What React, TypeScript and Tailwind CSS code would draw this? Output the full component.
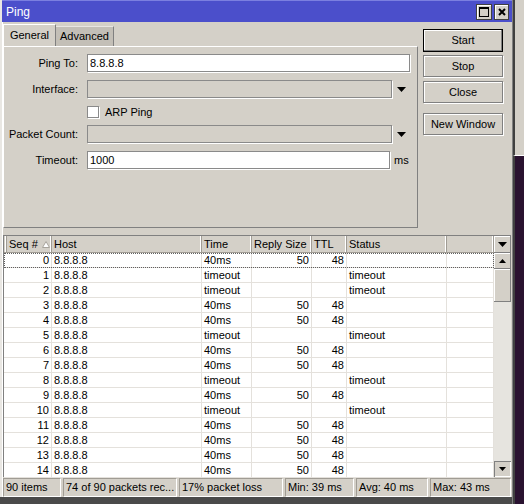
import React from 'react';

type Row = { seq: number; time: string; size?: string; ttl?: string; status?: string };

const rows: Row[] = [
  { seq: 0, time: '40ms', size: '50', ttl: '48' },
  { seq: 1, time: 'timeout', status: 'timeout' },
  { seq: 2, time: 'timeout', status: 'timeout' },
  { seq: 3, time: '40ms', size: '50', ttl: '48' },
  { seq: 4, time: '40ms', size: '50', ttl: '48' },
  { seq: 5, time: 'timeout', status: 'timeout' },
  { seq: 6, time: '40ms', size: '50', ttl: '48' },
  { seq: 7, time: '40ms', size: '50', ttl: '48' },
  { seq: 8, time: 'timeout', status: 'timeout' },
  { seq: 9, time: '40ms', size: '50', ttl: '48' },
  { seq: 10, time: 'timeout', status: 'timeout' },
  { seq: 11, time: '40ms', size: '50', ttl: '48' },
  { seq: 12, time: '40ms', size: '50', ttl: '48' },
  { seq: 13, time: '40ms', size: '50', ttl: '48' },
  { seq: 14, time: '40ms', size: '50', ttl: '48' },
];

function DownArrow() {
  return (
    <svg width="9" height="5" viewBox="0 0 9 5">
      <path d="M0 0h9L4.5 5z" fill="#000" />
    </svg>
  );
}

function UpArrow() {
  return (
    <svg width="7" height="4" viewBox="0 0 7 4">
      <path d="M0 4h7L3.5 0z" fill="#000" />
    </svg>
  );
}

function FormRow({ label, children, className = '' }: { label: string; children?: React.ReactNode; className?: string }) {
  return (
    <div className={`flex items-center ${className}`}>
      <div className="w-[75px] text-right pr-[1px]">{label}</div>
      <div className="ml-[8px] flex items-center">{children}</div>
    </div>
  );
}

function Button({ label, main = false, className = '' }: { label: string; main?: boolean; className?: string }) {
  return (
    <div
      className={`w-[80px] flex items-center justify-center ${
        main ? 'h-[23px] border border-black shadow-[inset_-1px_-1px_0_#808080,inset_1px_1px_0_#fff]' : 'h-[22px] border border-[#808080] shadow-[1px_1px_0_#fff,inset_1px_1px_0_#fff]'
      } ${className}`}
    >
      {label}
    </div>
  );
}

export default function App() {
  const header = 'h-[16px] flex items-center border-r border-[#a09c94] shadow-[inset_-1px_0_0_#fff] pl-[2px]';
  const cell = 'h-[15px] flex items-center border-r border-b border-[#e4e1dc] px-[2px]';

  return (
    <div className="w-[524px] h-[504px] flex bg-[#4a4a4a] overflow-hidden font-['Liberation_Sans',Arial,sans-serif] text-[11px] text-black leading-none">
      {/* window */}
      <div className="w-[512px] h-[497px] flex flex-col bg-[#d4d0c8] border-l-2 border-[#e9e7e3] shadow-[inset_1px_0_0_#fff]">
        {/* title bar */}
        <div className="h-[22px] bg-[#4b4fcb] border-t border-[#7b7fe0] flex items-center pl-[4px] pr-[3px] text-white text-[12px]">
          <span className="flex-1">Ping</span>
          <div className="w-[16px] h-[16px] bg-[#d4d0c8] border border-[#404040] shadow-[inset_1px_1px_0_#fff] flex items-center justify-center">
            <div className="w-[10px] h-[10px] border border-black border-t-2" />
          </div>
          <div className="w-[15px] h-[16px] ml-[2px] bg-[#d4d0c8] border border-[#404040] shadow-[inset_1px_1px_0_#fff] flex items-center justify-center">
            <svg width="8" height="8" viewBox="0 0 8 8">
              <path d="M1 1l6 6M7 1L1 7" stroke="#000" strokeWidth="2" />
            </svg>
          </div>
        </div>

        {/* top area */}
        <div className="h-[206px] flex">
          <div className="w-[415px] ml-[1px] pt-[2px] flex flex-col">
            <div className="h-[22px] flex items-end">
              <div className="w-[53px] h-[22px] border-t border-l border-white border-r border-r-[#808080] flex items-center justify-center pb-[1px]">
                General
              </div>
              <div className="w-[58px] h-[20px] bg-[#c3bfb7] border-t border-r border-t-[#e8e6e2] border-r-[#808080] flex items-center justify-center">
                Advanced
              </div>
            </div>
            <div className="h-[182px] border-t border-l border-white border-r border-b border-r-[#808080] border-b-[#808080] pt-[7px] flex flex-col">
              <FormRow label="Ping To:">
                <div className="w-[323px] h-[18px] bg-white border border-[#8a8a8a] shadow-[1px_1px_0_#fff] flex items-center pl-[2px]">
                  8.8.8.8
                </div>
              </FormRow>
              <FormRow label="Interface:" className="mt-[8px]">
                <div className="w-[305px] h-[18px] border border-[#8a8a8a] shadow-[1px_1px_0_#fff]" />
                <div className="ml-[5px]">
                  <DownArrow />
                </div>
              </FormRow>
              <FormRow label="" className="mt-[8px]">
                <div className="w-[12px] h-[12px] bg-white border border-[#8a8a8a] shadow-[1px_1px_0_#fff]" />
                <span className="ml-[6px]">ARP Ping</span>
              </FormRow>
              <FormRow label="Packet Count:" className="mt-[7px]">
                <div className="w-[305px] h-[18px] border border-[#8a8a8a] shadow-[1px_1px_0_#fff]" />
                <div className="ml-[5px]">
                  <DownArrow />
                </div>
              </FormRow>
              <FormRow label="Timeout:" className="mt-[8px]">
                <div className="w-[303px] h-[18px] bg-white border border-[#8a8a8a] shadow-[1px_1px_0_#fff] flex items-center pl-[2px]">
                  1000
                </div>
                <span className="ml-[4px]">ms</span>
              </FormRow>
            </div>
          </div>
          <div className="ml-[5px] pt-[7px] flex flex-col">
            <Button label="Start" main />
            <Button label="Stop" className="mt-[3px]" />
            <Button label="Close" className="mt-[4px]" />
            <Button label="New Window" className="mt-[10px]" />
          </div>
        </div>

        {/* splitter */}
        <div className="h-[7px]" />

        {/* table */}
        <div className="ml-[1px] mr-[1px] h-[242px] flex border-t border-l border-[#808080]">
          <div className="flex-1 flex flex-col bg-white">
            <div className="flex bg-[#d4d0c8] border-b border-[#a09c94]">
              <div className={`${header} w-[3px] pl-0`} />
              <div className={`${header} w-[45px] gap-[4px]`}>
                <span>Seq #</span>
                <svg width="8" height="7" viewBox="0 0 8 7">
                  <path d="M0.5 6.5h7L4 0.5z" fill="#fff" stroke="#a8a49c" />
                </svg>
              </div>
              <div className={`${header} w-[150px]`}>Host</div>
              <div className={`${header} w-[50px]`}>Time</div>
              <div className={`${header} w-[60px]`}>Reply Size</div>
              <div className={`${header} w-[35px]`}>TTL</div>
              <div className={`${header} w-[100px]`}>Status</div>
              <div className={`${header} flex-1`} />
            </div>
            {rows.map((r, i) => (
              <div key={r.seq} className={`flex ${i === 0 ? 'outline outline-1 outline-dotted outline-[#606060] -outline-offset-1' : ''}`}>
                <div className="w-[3px] h-[15px] border-b border-[#e4e1dc]" />
                <div className={`${cell} w-[45px] justify-end`}>{r.seq}</div>
                <div className={`${cell} w-[150px]`}>8.8.8.8</div>
                <div className={`${cell} w-[50px]`}>{r.time}</div>
                <div className={`${cell} w-[60px] justify-end`}>{r.size}</div>
                <div className={`${cell} w-[35px] justify-end`}>{r.ttl}</div>
                <div className={`${cell} w-[100px]`}>{r.status}</div>
                <div className={`${cell} flex-1`} />
              </div>
            ))}
          </div>
          {/* scrollbar */}
          <div className="w-[17px] flex flex-col bg-[#e6e4df]">
            <div className="h-[17px] bg-[#d4d0c8] border-b border-r border-[#808080] shadow-[inset_1px_1px_0_#fff] flex items-center justify-center">
              <DownArrow />
            </div>
            <div className="h-[16px] bg-[#d4d0c8] border-b border-r border-[#808080] shadow-[inset_1px_1px_0_#fff] flex items-center justify-center">
              <UpArrow />
            </div>
            <div className="h-[33px] bg-[#d4d0c8] border-b border-r border-[#808080] shadow-[inset_1px_1px_0_#fff]" />
            <div className="flex-1" />
            <div className="h-[16px] bg-[#d4d0c8] border-b border-r border-[#808080] shadow-[inset_1px_1px_0_#fff] flex items-center justify-center rotate-180">
              <UpArrow />
            </div>
          </div>
        </div>

        {/* status bar */}
        <div className="h-[19px] mt-[1px] flex gap-[2px] px-[1px]">
          {[
            ['90 items', 'w-[58px]'],
            ['74 of 90 packets rec...', 'w-[114px]'],
            ['17% packet loss', 'w-[104px]'],
            ['Min: 39 ms', 'w-[69px]'],
            ['Avg: 40 ms', 'w-[72px]'],
            ['Max: 43 ms', 'flex-1'],
          ].map(([t, w]) => (
            <div key={t} className={`${w} h-full border-t border-l border-[#a09c94] border-r border-b border-r-white border-b-white flex items-center pl-[2px] whitespace-nowrap overflow-hidden`}>
              {t}
            </div>
          ))}
        </div>
      </div>

      {/* right side background */}
      <div className="flex-1 flex flex-col border-l border-[#808080]">
        <div className="h-[155px] bg-[#d4d0c8] border-l-2 border-[#404040]" />
        <div className="flex-1 bg-[#2a1230] border-l-2 border-[#404040] border-t border-t-white" />
      </div>
    </div>
  );
}
